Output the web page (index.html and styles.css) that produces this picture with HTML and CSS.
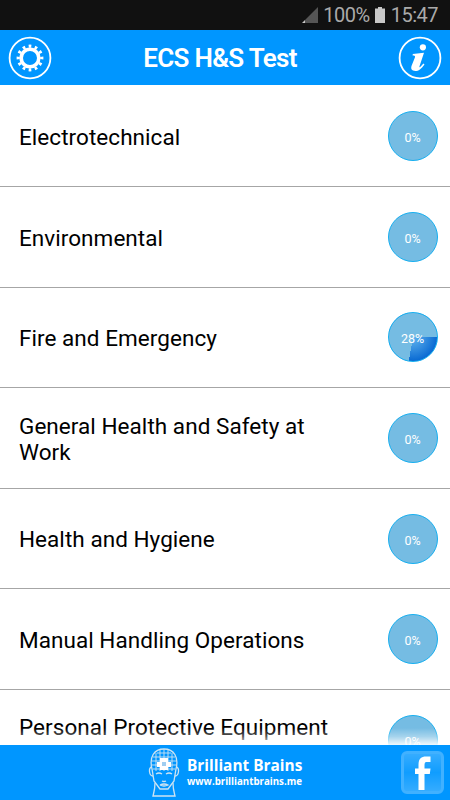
FILE: index.html
```
<!DOCTYPE html>
<html lang="en">
<head>
    <meta charset="UTF-8">
    <meta name="viewport" content="width=device-width, initial-scale=1.0">
    <title>ECS H&amp;S Test</title>
    <link rel="stylesheet" href="styles.css">
</head>
<body>
<div class="status-bar">
    <svg class="signal" width="16" height="16" viewBox="0 0 16 16">
        <path d="M16 0V16H3V13Z" fill="#555"/>
        <path d="M0 16L3 13V16Z" fill="#c8c8c8"/>
    </svg>
    <span class="battery-text">100%</span>
    <svg class="battery" width="10" height="16" viewBox="0 0 10 16">
        <path d="M3 0H7V1.5H10V16H0V1.5H3Z" fill="#c8c8c8"/>
    </svg>
    <span class="clock">15:47</span>
</div>

<header class="header">
    <svg width="44" height="44" viewBox="0 0 44 44">
        <circle cx="22" cy="22" r="20.4" fill="none" stroke="#fff" stroke-width="1.8"/>
        <circle cx="22" cy="22" r="8.8" fill="none" stroke="#fff" stroke-width="3.6"/>
        <circle cx="22" cy="22" r="11.8" fill="none" stroke="#fff" stroke-width="3.2" pathLength="120" stroke-dasharray="4.4 5.6" stroke-dashoffset="2.2"/>
    </svg>
    <h1>ECS H&amp;S Test</h1>
    <svg width="44" height="44" viewBox="0 0 44 44">
        <circle cx="22" cy="22" r="20.4" fill="none" stroke="#fff" stroke-width="1.8"/>
        <circle cx="24.9" cy="11.3" r="3.1" fill="#fff"/>
        <path d="M14.8 17.9L26 16.8L21.6 30C21.1 31.6 21.7 31.6 22.7 30.6L25.4 27.6L26.5 28.4C23.2 33 20.6 35 17.4 35C13.6 35 12.6 32.6 13.6 29.8L16.9 21.4C17.4 20 16.8 19.5 14.6 19.5Z" fill="#fff"/>
    </svg>
</header>

<main class="topics">
    <div class="topic">
        <span class="name">Electrotechnical</span>
        <span class="progress">0%</span>
    </div>
    <div class="topic">
        <span class="name">Environmental</span>
        <span class="progress">0%</span>
    </div>
    <div class="topic">
        <span class="name">Fire and Emergency</span>
        <span class="progress started">28%</span>
    </div>
    <div class="topic">
        <span class="name">General Health and Safety at Work</span>
        <span class="progress">0%</span>
    </div>
    <div class="topic">
        <span class="name">Health and Hygiene</span>
        <span class="progress">0%</span>
    </div>
    <div class="topic">
        <span class="name">Manual Handling Operations</span>
        <span class="progress">0%</span>
    </div>
    <div class="topic">
        <span class="name two-lines">Personal Protective Equipment</span>
        <span class="progress">0%</span>
    </div>
</main>

<footer class="footer">
    <div class="brand">
        <svg width="32" height="50" viewBox="0 0 32 50">
            <g fill="none" stroke="#cde3f2" stroke-width="1.3">
                <path d="M4 21C1 9 6 1 16 1S31 9 28 21L26 33L20 41H12L6 33Z"/>
                <path d="M4 19C0 19 1 28 5 28M28 19C32 19 31 28 27 28"/>
                <path d="M7 35C7 41 6 44 5 48H27C26 44 25 41 25 35"/>
                <path d="M8 26Q11 24 14 26M18 26Q21 24 24 26M14 33Q16 34 18 33M12 37Q16 35 20 37Q16 39 12 37"/>
            </g>
            <path d="M9 5H23M5 9H27M4 13H28M4 17H28M5 21H27M8 5V23M12 2V23M16 1V23M20 2V23M24 5V23" fill="none" stroke="#cde3f2" stroke-width="0.9"/>
            <path d="M12 10H20V14H23V19H20V22H12V19H9V14H12Z" fill="#fff"/>
            <path d="M14 14H18V18H14Z" fill="#9fcdf0"/>
        </svg>
        <div class="brand-text">
            <div class="brand-name">Brilliant Brains</div>
            <div class="brand-url">www.brilliantbrains.me</div>
        </div>
    </div>
    <div class="facebook">
        <svg width="16" height="34" viewBox="0 0 16 34">
            <path d="M3.5 34V18H0V12.5H3.5V9C3.5 3 6 0.5 11 0.5H15.5V6H12C10 6 9.5 7 9.5 9V12.5H15.5L14.8 18H9.5V34Z" fill="#fff"/>
        </svg>
    </div>
</footer>
</body>
</html>
```
FILE: styles.css
```
* {
    box-sizing: border-box;
}
body {
    font-family: Roboto, sans-serif;
    background-color: #fff;
    display: flex;
    flex-direction: column;
    height: 800px;
    margin: 0;
    overflow: hidden;
}
.status-bar {
    display: flex;
    flex: none;
    align-items: center;
    justify-content: flex-end;
    height: 30px;
    padding-right: 12px;
    background-color: #111;
    color: #aaa;
    font-size: 20px;
    letter-spacing: -0.5px;
}
.signal {
    margin: 0 5px 0 0;
}
.battery {
    margin: 0 6px 0 5px;
}
.header {
    display: flex;
    flex: none;
    align-items: center;
    justify-content: space-between;
    height: 55px;
    padding: 0 8px;
    background-color: #0096ff;
}
h1 {
    margin: 2px 10px 0 0;
    color: #fff;
    font-size: 26px;
    font-weight: 600;
    letter-spacing: -0.7px;
    line-height: 55px;
}
.topics {
    position: relative;
    flex: 1;
    min-height: 0;
    padding-top: 1.4px;
    overflow: hidden;
}
/* fade above the footer */
.topics::after {
    content: "";
    position: absolute;
    left: 0;
    right: 0;
    bottom: 0;
    height: 17px;
    background: linear-gradient(rgba(255, 255, 255, 0), rgba(255, 255, 255, 0.35) 50%, rgba(255, 255, 255, 0.9));
}
.topic {
    display: flex;
    align-items: center;
    justify-content: space-between;
    height: 100.6px;
    padding: 0 12.5px 0 19px;
    border-bottom: 1px solid #a6a6a6;
}
.name {
    width: 320px;
    color: #000;
    font-size: 22.5px;
    letter-spacing: 0.05px;
    line-height: 26.4px;
    padding-top: 2px;
}
.two-lines {
    height: 54.8px;
}
.progress {
    display: flex;
    align-items: center;
    justify-content: center;
    width: 50px;
    height: 50px;
    padding-top: 3px;
    border: 1.5px solid #16aff0;
    border-radius: 50%;
    background-color: #75bce3;
    color: #fff;
    font-size: 12.5px;
}
.started {
    background: conic-gradient(from 90deg, transparent 0 100deg, #75bce3 100deg),
        radial-gradient(circle, #62b5ee, #0062d0 75%);
    background-origin: border-box;
}
.footer {
    display: flex;
    flex: none;
    align-items: center;
    justify-content: space-between;
    height: 55px;
    padding: 0 6px 0 148px;
    background-color: #0096ff;
    color: #fff;
}
.brand {
    display: flex;
    align-items: center;
    gap: 7px;
}
.brand-text {
    font-family: "Open Sans", sans-serif;
    font-weight: 700;
    white-space: nowrap;
}
.brand-name {
    font-size: 15.4px;
    line-height: 18px;
}
.brand-url {
    font-size: 9.7px;
    line-height: 14px;
}
.facebook {
    display: flex;
    align-items: center;
    justify-content: center;
    width: 43px;
    height: 43px;
    border: 3px solid #41b1ff;
    border-radius: 6px;
    background: linear-gradient(#35acff, #109dff 50%, #35acff);
}
```
